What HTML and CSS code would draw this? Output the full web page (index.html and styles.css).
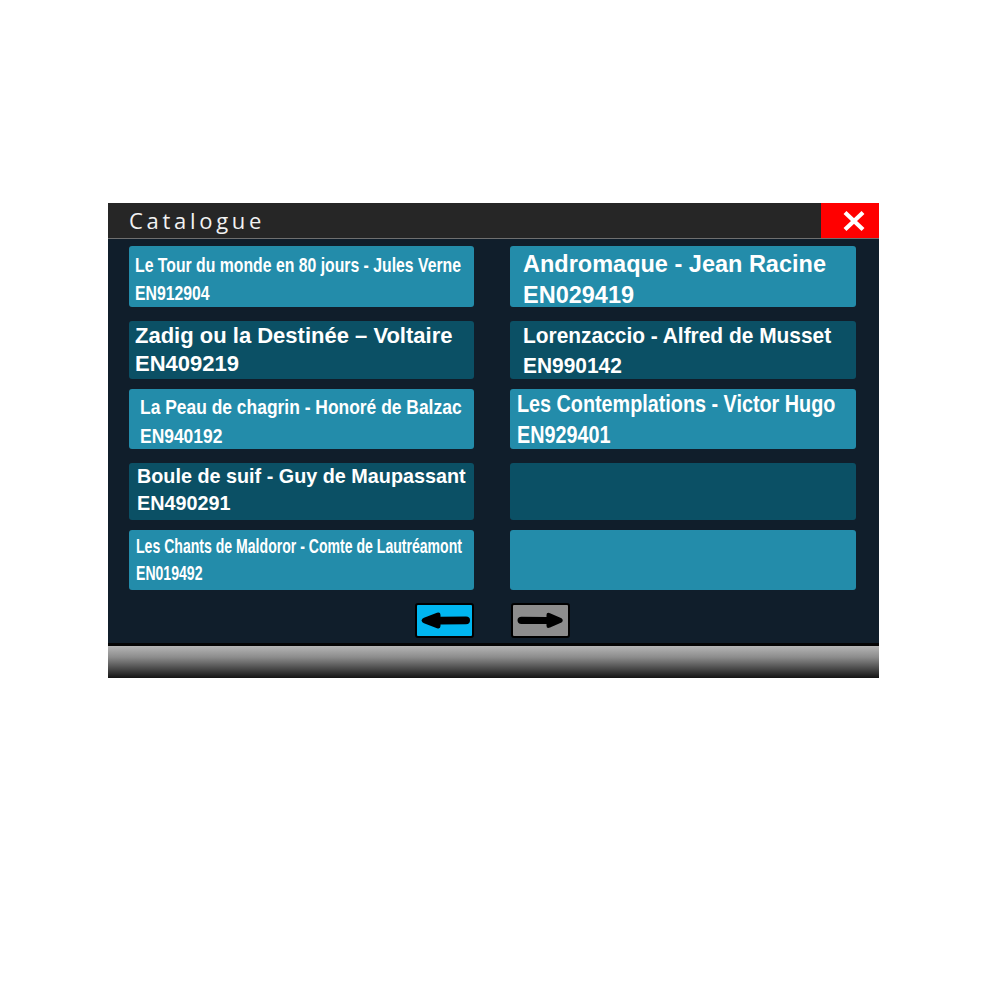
FILE: index.html
```html
<!DOCTYPE html>
<html lang="fr">
<head>
<meta charset="utf-8">
<title>Catalogue</title>
<link rel="stylesheet" href="styles.css">
</head>
<body>
<div class="panel">
  <header class="titlebar">
    <h1 class="title">Catalogue</h1>
    <button class="close" aria-label="Fermer">
      <svg width="24" height="22" viewBox="0 0 24 22"><path d="M3 2.5 L21 19.5 M21 2.5 L3 19.5" stroke="#fff" stroke-width="4.2" fill="none"/></svg>
    </button>
  </header>
  <main class="content">
    <div class="grid">
      <div class="card light r1 t1"><span class="line">Le Tour du monde en 80 jours - Jules Verne</span><span class="line">EN912904</span></div>
      <div class="card light r1 t2"><span class="line">Andromaque - Jean Racine</span><span class="line">EN029419</span></div>
      <div class="card dark r2 t3"><span class="line">Zadig ou la Destinée – Voltaire</span><span class="line">EN409219</span></div>
      <div class="card dark r2 t4"><span class="line">Lorenzaccio - Alfred de Musset</span><span class="line">EN990142</span></div>
      <div class="card light r3 t5"><span class="line">La Peau de chagrin - Honoré de Balzac</span><span class="line">EN940192</span></div>
      <div class="card light r3 t6"><span class="line">Les Contemplations - Victor Hugo</span><span class="line">EN929401</span></div>
      <div class="card dark r4 t7"><span class="line">Boule de suif - Guy de Maupassant</span><span class="line">EN490291</span></div>
      <div class="card dark r4"></div>
      <div class="card light r5 t8"><span class="line">Les Chants de Maldoror - Comte de Lautréamont</span><span class="line">EN019492</span></div>
      <div class="card light r5"></div>
    </div>
    <nav class="pager">
      <button class="nav prev" aria-label="Précédent">
        <svg width="55" height="31" viewBox="0 0 55 31"><path d="M4.5,15.5 Q5,13.5 7,12.7 L20,7.8 Q23.5,6.8 23.5,10 L23.5,11.8 L49,11.6 Q53,11.6 53,15.3 Q53,19.2 49,19.2 L23.5,19.4 L23.5,21 Q23.5,24.3 20,23.2 L7,18.3 Q5,17.5 4.5,15.5 Z" fill="#000"/></svg>
      </button>
      <button class="nav next" aria-label="Suivant">
        <svg width="55" height="31" viewBox="0 0 55 31"><path d="M4.5,15.3 Q4.5,11.8 8.5,11.8 L33.5,12 L33.5,10 Q33.5,7 37,8.2 L48.5,13.2 Q51,15.3 48.5,17.6 L37,22.6 Q33.5,24 33.5,20.8 L33.5,19 L8.5,19 Q4.5,19 4.5,15.3 Z" fill="#000"/></svg>
      </button>
    </nav>
  </main>
  <div class="footer-bar"></div>
</div>
</body>
</html>
```

FILE: styles.css
```css
html, body {
  margin: 0;
  padding: 0;
  background: #ffffff;
}

body {
  padding: 203px 0 0 108px;
  font-family: "Liberation Sans", Arial, sans-serif;
}

.panel {
  width: 771px;
  display: flex;
  flex-direction: column;
}

.titlebar {
  display: flex;
  align-items: stretch;
  justify-content: space-between;
  height: 35px;
  background: #262626;
  border-bottom: 1px solid #6f6f6f;
}

.title {
  margin: 0;
  padding-left: 21px;
  font-family: "Open Sans", "Liberation Sans", sans-serif;
  font-weight: 400;
  font-size: 22px;
  line-height: 34px;
  letter-spacing: 3.7px;
  color: #f2f2f2;
}

.close {
  width: 58px;
  border: 0;
  padding: 0 0 0 7px;
  margin: 0;
  background: #ff0000;
  display: flex;
  align-items: center;
  justify-content: center;
}

.content {
  background: #101e2b;
  padding: 7px 23px 5px 21px;
}

.grid {
  display: grid;
  grid-template-columns: 345px 346px;
  grid-template-rows: 75px 68px 74px 67px 60px;
  column-gap: 36px;
  align-items: start;
}

.card {
  border-radius: 3px;
  color: #ffffff;
  font-weight: 700;
  box-sizing: border-box;
  overflow: visible;
}

.card.light { background: #238caa; }
.card.dark { background: #0b5065; }

.r1 { height: 61px; }
.r2 { height: 58px; }
.r3 { height: 60px; }
.r4 { height: 57px; }
.r5 { height: 60px; }

.line {
  display: block;
  white-space: nowrap;
  transform-origin: left center;
}

.t1 { padding: 5px 0 0 6px; font-size: 20.5px; line-height: 28px; }
.t1 .line { transform: scaleX(0.77); }

.t2 { padding: 3px 0 0 13px; font-size: 23.5px; line-height: 31px; }

.t3 { padding: 1px 0 0 6px; font-size: 22px; line-height: 28px; }

.t4 { padding: 0 0 0 13px; font-size: 22px; line-height: 30px; }
.t4 .line { transform: scaleX(0.95); }

.t5 { padding: 3px 0 0 11px; font-size: 21px; line-height: 29px; }
.t5 .line { transform: scaleX(0.83); }

.t6 { padding: 0 0 0 7px; font-size: 23px; line-height: 31px; }
.t6 .line { transform: scaleX(0.86); }

.t7 { padding: 0 0 0 8px; font-size: 19.8px; line-height: 27px; }

.t8 { padding: 2px 0 0 7px; font-size: 21px; line-height: 27px; }
.t8 .line { transform: scaleX(0.67); }

.pager {
  display: flex;
  justify-content: center;
  gap: 37px;
  margin-top: 13px;
}

.nav {
  width: 59px;
  height: 35px;
  padding: 0;
  margin: 0;
  border: 2px solid #000;
  border-radius: 3px;
  display: flex;
  align-items: center;
  justify-content: center;
}

.nav.prev { background: #00b6f0; }
.nav.next { background: #8d8d8d; }

.footer-bar {
  height: 32px;
  border-top: 3px solid #050505;
  background: linear-gradient(to bottom, #b6b6b6 0%, #8c8c8c 35%, #4b4b4b 70%, #141414 100%);
}
```
